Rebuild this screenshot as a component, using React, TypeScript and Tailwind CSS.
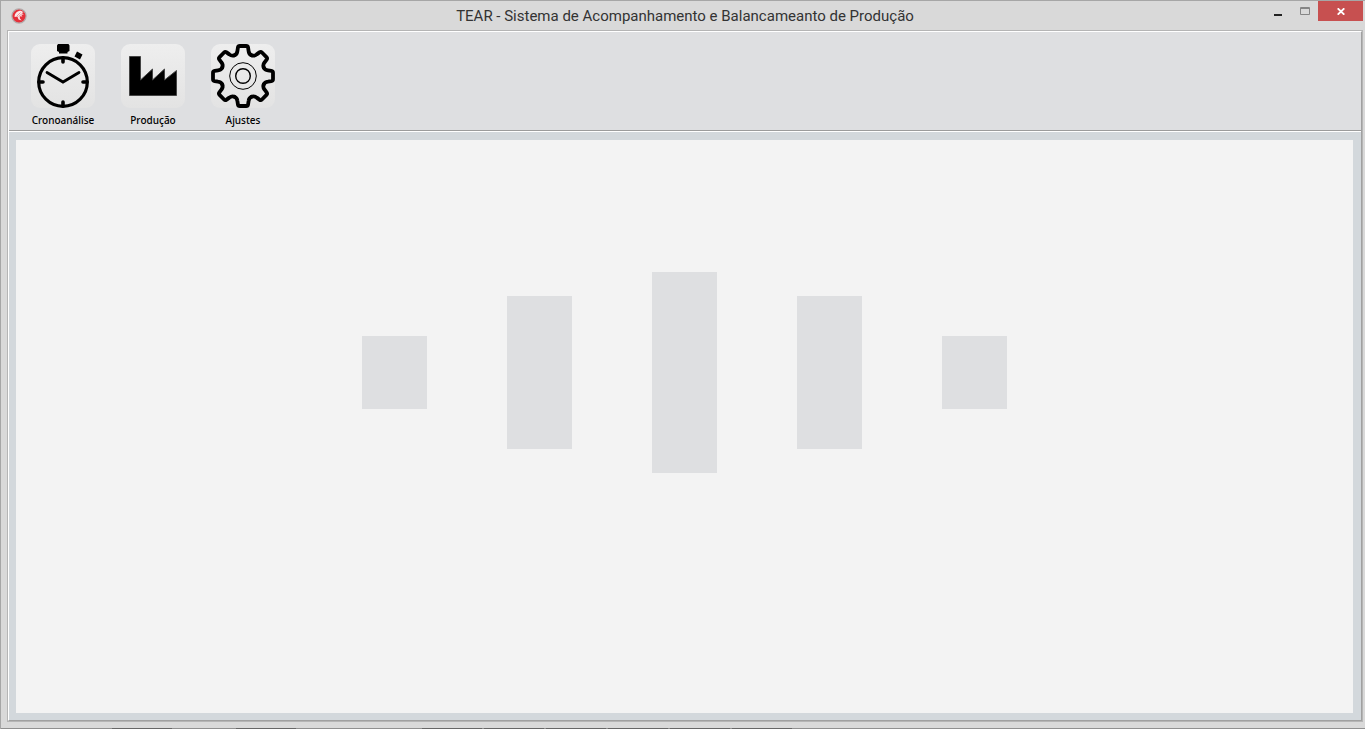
import type { ReactNode } from "react";

const GEAR_TOOTH =
  "M-8.6-20.7C-6.4-21.6-5.8-23-5.6-25L-5.1-28.3Q-4.8-30-3.2-30H3.2Q4.8-30 5.1-28.3L5.6-25C5.8-23 6.4-21.6 8.6-20.7";

function StopwatchIcon() {
  return (
    <svg viewBox="0 0 64 64" className="size-16" fill="none" stroke="black" aria-hidden="true">
      <path d="M27 0H37.5L38.5 1.5V7L36.5 8V9.5H28V8L26 7V1.5Z" fill="black" stroke="none" />
      <path d="M46 7.5L51.5 10.5L49 15.5L43.5 12.5Z" fill="black" stroke="none" />
      <circle cx="32" cy="38" r="24.3" strokeWidth="3.2" />
      <path d="M32 14V18M32 58V62M8 38H12M52 38H56" strokeWidth="3.6" strokeLinecap="round" />
      <path d="M16 28.5L32 38L48 28.5" strokeWidth="2.8" strokeLinecap="round" />
    </svg>
  );
}

function FactoryIcon() {
  return (
    <svg viewBox="0 0 64 64" className="size-16" aria-hidden="true">
      <path
        d="M8.5 12.5H19.5V36L31.5 25V36L43.5 25V36L55.5 26.5V51.5H8.5Z"
        fill="black"
        stroke="#444"
        strokeWidth="1"
      />
    </svg>
  );
}

function GearIcon() {
  return (
    <svg viewBox="-32 -32 64 64" className="size-16" fill="none" stroke="black" aria-hidden="true">
      {[0, 45, 90, 135, 180, 225, 270, 315].map((angle) => (
        <path key={angle} d={GEAR_TOOTH} transform={`rotate(${angle})`} strokeWidth="3.8" strokeLinecap="round" />
      ))}
      <circle r="13.3" strokeWidth="1" />
      <circle r="7.3" strokeWidth="1.4" />
    </svg>
  );
}

function AppIcon() {
  return (
    <svg viewBox="0 0 16 16" className="size-4" aria-hidden="true">
      <circle cx="8" cy="8" r="7.1" fill="#e5303a" stroke="#b3aaaa" strokeWidth="1.2" />
      <path
        d="M3.6 9C3.4 5.4 6.2 2.8 10 2.8L12.6 4.2L10.6 5L12.8 6.4L10.2 6.8L11.4 8.4L8.8 8.2L8.8 10.2L10.6 12.6L7.6 11.4L6.4 8.4Z"
        fill="#fbe9ea"
      />
      <path d="M6 8L9.5 4.5M7.5 8.5L10.5 6" stroke="#ec7378" strokeWidth="0.7" />
    </svg>
  );
}

function ToolButton({ label, children }: { label: string; children: ReactNode }) {
  return (
    <button type="button" className="flex w-[90px] flex-col items-center gap-1">
      <span className="rounded-[9px] bg-linear-to-t from-[#e3e3e3] to-[#eeeeee]">{children}</span>
      <span className="text-[10px] leading-4 font-medium text-black">{label}</span>
    </button>
  );
}

const bars = [
  { id: "far-left", height: "h-[73px]" },
  { id: "left", height: "h-[153px]" },
  { id: "center", height: "h-[201px]" },
  { id: "right", height: "h-[153px]" },
  { id: "far-right", height: "h-[73px]" },
];

const edgeMarks = [
  { id: 1, space: "ml-[111px]" },
  { id: 2, space: "ml-16" },
  { id: 3, space: "ml-[126px]" },
  { id: 4, space: "ml-0.5" },
  { id: 5, space: "ml-0.5" },
  { id: 6, space: "ml-0.5" },
  { id: 7, space: "ml-0.5" },
  { id: 8, space: "ml-0.5" },
];

export default function App() {
  return (
    <div className="flex h-screen flex-col border-t border-l border-[#a6a6a6] bg-[#d9d9d9] font-['Noto_Sans',sans-serif]">
      <header className="grid h-[29px] shrink-0 grid-cols-[1fr_auto_1fr] items-start pl-1">
        <div className="pt-[7px] pl-[6px]">
          <AppIcon />
        </div>
        <h1 className="pt-1 font-['Roboto',sans-serif] text-[15px] leading-[22px] text-[#333333]">
          TEAR - Sistema de Acompanhamento e Balancameanto de Produção
        </h1>
        <div className="flex justify-end pr-[2px]">
          <button type="button" aria-label="Minimizar" className="flex h-5 w-[27px] items-center justify-center">
            <svg viewBox="0 0 8 12" className="h-3 w-2" aria-hidden="true">
              <path d="M0 9H8V11H0Z" fill="#222" />
            </svg>
          </button>
          <button type="button" aria-label="Maximizar" className="flex h-5 w-[27px] items-center justify-center">
            <svg viewBox="0 0 10 8" className="h-2 w-[10px]" aria-hidden="true">
              <path d="M0.5 0.5H9.5V7.5H0.5ZM0 1.5H10" fill="none" stroke="#858585" />
            </svg>
          </button>
          <button type="button" aria-label="Fechar" className="flex h-5 w-[45px] items-center justify-center bg-[#c75050]">
            <svg viewBox="0 0 8 7" className="h-[7px] w-2" aria-hidden="true">
              <path d="M0.7 0.3L7.3 6.7M7.3 0.3L0.7 6.7" stroke="white" strokeWidth="1.8" />
            </svg>
          </button>
        </div>
      </header>

      <div className="mr-[2px] ml-[6px] flex min-h-0 flex-1 flex-col border border-[#b5b5b5]">
        <div className="flex min-h-0 flex-1 flex-col border border-t-white border-r-[#a0a0a0] border-b-[#a0a0a0] border-l-white">
          <nav className="flex h-[99px] shrink-0 items-start border-b border-[#9c9c9c] bg-[#dedfe1] pt-3 pl-[9px]">
            <ToolButton label="Cronoanálise">
              <StopwatchIcon />
            </ToolButton>
            <ToolButton label="Produção">
              <FactoryIcon />
            </ToolButton>
            <ToolButton label="Ajustes">
              <GearIcon />
            </ToolButton>
          </nav>
          <main className="flex min-h-0 flex-1 border-t border-white bg-[#d3d8dc] pt-2 pr-2 pb-[7px] pl-[7px]">
            <div className="flex flex-1 items-start justify-center bg-[#f3f3f3] pt-[132px]">
              <div className="flex items-center gap-20">
                {bars.map((bar) => (
                  <div key={bar.id} className={`w-[65px] bg-[#dedfe1] ${bar.height}`} />
                ))}
              </div>
            </div>
          </main>
        </div>
      </div>

      <footer className="mt-[6px] flex h-px shrink-0 bg-[#8f8f8f]">
        {edgeMarks.map((mark) => (
          <span key={mark.id} className={`h-px w-[60px] bg-[#666666] ${mark.space}`} />
        ))}
      </footer>
    </div>
  );
}
